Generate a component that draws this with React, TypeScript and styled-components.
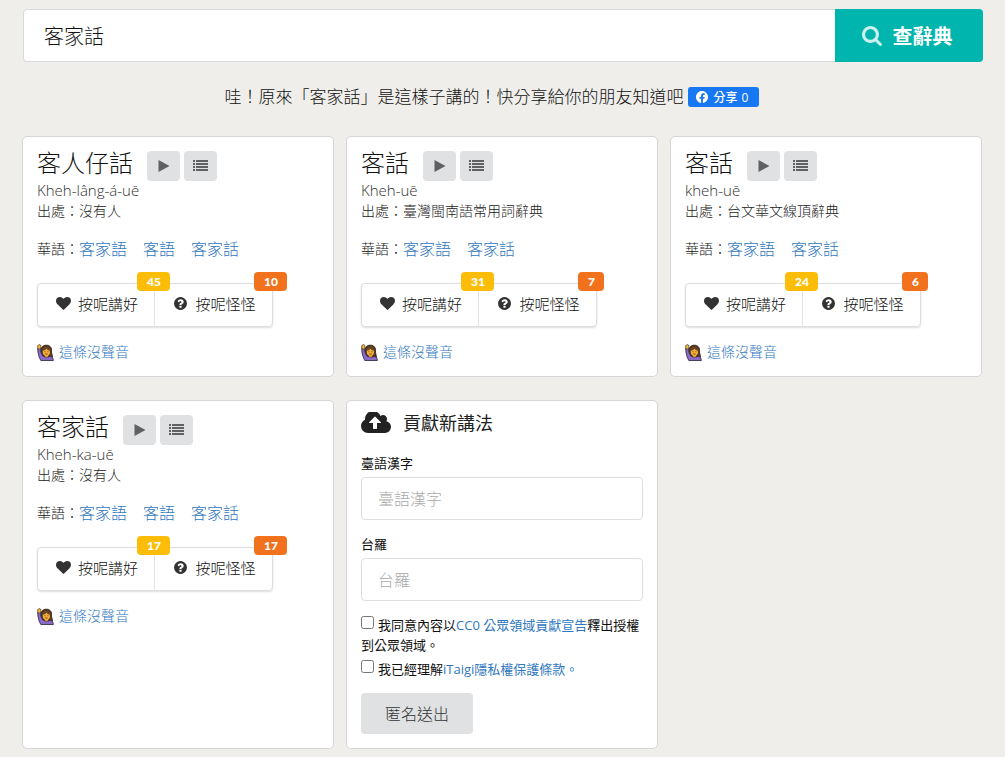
import React, { useState } from "react";
import styled, { createGlobalStyle } from "styled-components";

const GlobalStyle = createGlobalStyle`
  * { box-sizing: border-box; }
  body {
    margin: 0;
    background: #efeeeb;
    color: #111;
    font-family: "Open Sans", "Noto Sans CJK TC", sans-serif;
    font-size: 14px;
    font-weight: 300;
    line-height: 20px;
  }
  button, input { font-family: inherit; font-weight: inherit; }
`;

const Page = styled.main`
  max-width: 1200px;
  margin: 0 auto;
  padding: 9px 22px 8px;
`;

const SearchBar = styled.form`
  display: flex;
  height: 53px;
  margin-left: 1px;
`;

const SearchInput = styled.input`
  flex: 1;
  min-width: 0;
  padding: 0 20px;
  border: 1px solid #d9dadb;
  border-right: 0;
  border-radius: 4px 0 0 4px;
  background: #fff;
  color: #111;
  font-size: 20px;
  outline: none;
`;

const SearchButton = styled.button`
  display: flex;
  align-items: center;
  justify-content: center;
  gap: 11px;
  width: 148px;
  padding: 0 4px 0 0;
  border: 0;
  border-radius: 0 4px 4px 0;
  background: #00b5ad;
  color: #fff;
  font-size: 20px;
  font-weight: 700;
  svg { opacity: 0.8; }
`;

const ShareLine = styled.p`
  display: flex;
  align-items: center;
  justify-content: center;
  gap: 4px;
  height: 24px;
  margin: 23px 22px 27px 0;
  font-size: 17px;
`;

const ShareButton = styled.button`
  display: flex;
  align-items: center;
  gap: 6px;
  width: 71px;
  height: 20px;
  padding: 0 8px;
  border: 0;
  border-radius: 3px;
  background: #1877f2;
  color: #fff;
  font-size: 12px;
  font-weight: 500;
  white-space: nowrap;
`;

const ShareCount = styled.span`
  margin-left: -2px;
`;

const Cards = styled.section`
  display: grid;
  grid-template-columns: repeat(3, 1fr);
  gap: 23px 12px;
  margin-right: 1px;
`;

const Card = styled.article`
  min-width: 0;
  padding: 12px 14px 14px;
  border: 1px solid #d6d6d8;
  border-radius: 5px;
  background: #fff;
`;

const WordRow = styled.header`
  display: flex;
  align-items: flex-start;
  gap: 4px;
  height: 31px;
`;

const Word = styled.h2`
  margin: 0 10px 0 0;
  font-size: 24px;
  font-weight: 300;
  line-height: 28px;
`;

const IconButton = styled.button`
  display: flex;
  align-items: center;
  justify-content: center;
  width: 33px;
  height: 30px;
  margin-top: 2px;
  padding: 0;
  border: 0;
  border-radius: 4px;
  background: #e0e1e2;
  color: #606162;
`;

const Reading = styled.div`
  color: #333;
  font-size: 15px;
  line-height: 21px;
`;

const Source = styled.div`
  color: #222;
`;

const Mandarin = styled.div`
  display: flex;
  align-items: center;
  height: 24px;
  margin-top: 16px;
`;

const TextLink = styled.a`
  color: #3077be;
  text-decoration: none;
`;

const WordLink = styled(TextLink)`
  margin-right: 16px;
  font-size: 16px;
`;

const Votes = styled.div`
  display: inline-flex;
  margin-top: 22px;
  border: 1px solid #dcddde;
  border-radius: 4px;
  box-shadow: 0 1px 2px rgba(34, 36, 38, 0.15);
`;

const VoteButton = styled.button`
  position: relative;
  display: flex;
  align-items: center;
  justify-content: center;
  gap: 7px;
  width: 116px;
  height: 42px;
  padding: 0 0 3px 2px;
  border: 0;
  background: transparent;
  color: #111;
  font-size: 15px;
  & + & {
    width: 118px;
    border-left: 1px solid #e4e4e5;
  }
  svg { color: #333; }
`;

const VoteCount = styled.span<{ $tone: string }>`
  position: absolute;
  z-index: 1;
  top: -12px;
  left: 99px;
  padding: 0 9px 0 10px;
  border-radius: 4px;
  background: ${(p) => p.$tone};
  color: #fff;
  font-family: Lato, sans-serif;
  font-size: 12px;
  font-weight: 900;
  line-height: 19px;
`;

const SoundRow = styled.div`
  display: flex;
  align-items: center;
  gap: 5px;
  margin-top: 15px;
`;

const FormTitle = styled.h3`
  display: flex;
  align-items: center;
  gap: 12px;
  height: 20px;
  margin: 0 0 20px;
  color: #222;
  font-size: 18px;
  font-weight: 400;
`;

const FieldLabel = styled.label`
  display: block;
  margin-bottom: 4px;
  font-size: 13px;
  font-weight: 400;
`;

const TextField = styled.input`
  display: block;
  width: 100%;
  height: 43px;
  margin-bottom: 14px;
  padding: 0 16px;
  border: 1px solid #dededf;
  border-radius: 4px;
  background: #fff;
  font-size: 16px;
  outline: none;
  &::placeholder { color: #aaa; opacity: 1; }
`;

const Consent = styled.div`
  margin-bottom: 4px;
  font-size: 13px;
  font-weight: 400;
`;

const Tick = styled.input`
  width: 13px;
  height: 13px;
  margin: 0 4px 0 0;
  vertical-align: 1px;
`;

const SubmitButton = styled.button`
  height: 41px;
  margin-top: 10px;
  padding: 0 24px 2px;
  border: 0;
  border-radius: 4px;
  background: #e0e1e2;
  color: #333;
  font-size: 16px;
`;

type GlyphProps = { d: string; width: number; height: number; box?: string };

const Glyph = ({ d, width, height, box = "0 0 1792 1792" }: GlyphProps) => (
  <svg width={width} height={height} viewBox={box} fill="currentColor" aria-hidden="true">
    <path d={d} />
  </svg>
);

const SEARCH =
  "M1216 832q0-185-131.5-316.5t-316.5-131.5-316.5 131.5-131.5 316.5 131.5 316.5 316.5 131.5 316.5-131.5 131.5-316.5zm512 832q0 52-38 90t-90 38q-54 0-90-38l-343-342q-179 124-399 124-143 0-273.5-55.5t-225-150-150-225-55.5-273.5 55.5-273.5 150-225 225-150 273.5-55.5 273.5 55.5 225 150 150 225 55.5 273.5q0 220-124 399l343 343q37 37 37 90z";
const HEART =
  "M896 1664q-26 0-44-18l-624-602q-10-8-27.5-26t-55.5-65.5-68-97.5-53.5-121-23.5-138q0-220 127-344t351-124q62 0 126.5 21.5t120 58 95.5 68.5 76 68q36-36 76-68t95.5-68.5 120-58 126.5-21.5q224 0 351 124t127 344q0 221-229 450l-623 600q-18 18-44 18z";
const QUESTION =
  "M1024 1376v-192q0-14-9-23t-23-9h-192q-14 0-23 9t-9 23v192q0 14 9 23t23 9h192q14 0 23-9t9-23zm256-672q0-88-55.5-163t-138.5-116-170-41q-243 0-371 213-15 24 8 42l132 100q7 6 19 6 16 0 25-12 53-68 86-92 34-24 86-24 48 0 85.5 26t37.5 59q0 38-20 61t-68 45q-63 28-115.5 86.5t-52.5 125.5v36q0 14 9 23t23 9h192q14 0 23-9t9-23q0-19 21.5-49.5t54.5-49.5q32-18 49-28.5t46-35 44.5-48 28-60.5 12.5-81zm384 192q0 209-103 385.5t-279.5 279.5-385.5 103-385.5-103-279.5-279.5-103-385.5 103-385.5 279.5-279.5 385.5-103 385.5 103 279.5 279.5 103 385.5z";
const CLOUD =
  "M1280 864q0-14-9-23l-352-352q-9-9-23-9t-23 9l-351 351q-10 12-10 24 0 14 9 23t23 9h224v352q0 13 9.5 22.5t22.5 9.5h192q13 0 22.5-9.5t9.5-22.5v-352h224q13 0 22.5-9.5t9.5-22.5zm640 288q0 159-112.5 271.5t-271.5 112.5h-1088q-185 0-316.5-131.5t-131.5-316.5q0-130 70-240t188-165q-2-30-2-43 0-212 150-362t362-150q156 0 285.5 87t188.5 231q71-62 166-62 106 0 181 75t75 181q0 76-41 138 130 31 213.5 135.5t83.5 238.5z";

const PlayIcon = () => (
  <svg width="12" height="12" viewBox="0 0 12 12" fill="currentColor" aria-hidden="true">
    <path d="M0.500 0 L11.500 6 L0.500 12 Z" />
  </svg>
);

const ListIcon = () => (
  <svg width="15" height="12" viewBox="0 0 15 12" fill="currentColor" aria-hidden="true">
    <path d="M0 0h2v2H0zM0 3h2v2H0zM0 6h2v2H0zM0 9h2v2H0zM3 0h12v2H3zM3 3h12v2H3zM3 6h12v2H3zM3 9h12v2H3z" />
  </svg>
);

const FacebookIcon = () => (
  <svg width="12" height="12" viewBox="0 0 24 24" fill="#fff" aria-hidden="true">
    <path d="M24 12.07C24 5.4 18.63 0 12 0S0 5.4 0 12.07C0 18.1 4.39 23.1 10.13 24v-8.44H7.08v-3.49h3.05V9.41c0-3.02 1.79-4.69 4.53-4.69 1.31 0 2.68.24 2.68.24v2.97h-1.51c-1.49 0-1.96.93-1.96 1.89v2.25h3.33l-.53 3.49h-2.8V24C19.61 23.1 24 18.1 24 12.07z" />
  </svg>
);

const RaisedHandIcon = () => (
  <svg width="17" height="17" viewBox="0 0 17 17" aria-hidden="true">
    <path d="M4.200 8.500C3.700 3.500 5.500 1.200 9.300 1.200s5.700 2.300 5.200 7l1 5H5z" fill="#5a3921" stroke="#1a120c" strokeWidth=".8" />
    <path d="M.7 4.500L3.600 4.500l.2 3.500 2.200 4c2.300 1.400 5.200 1.300 7.300.2 2 .5 3 2.300 3.100 4.300H3.800C2 13.500.8 9.500.7 5z" fill="#8a6cc4" stroke="#2a2040" strokeWidth=".8" />
    <path d="M.7 1.600L2.300.5l1.600.9v3L2.500 5.200.7 4.500z" fill="#f0b83c" stroke="#2b1b10" strokeWidth=".6" />
    <path d="M7.800 11h3.400v1.500c-.8 1-2.600 1-3.400 0z" fill="#dc982e" />
    <ellipse cx="9.400" cy="7.800" rx="3.700" ry="4" fill="#f4b13a" />
    <path d="M5.500 6.700c2-.2 3.300-1 3.900-2 .7 1 2 1.800 3.900 2C13.200 4 11.700 2.800 9.400 2.800S5.600 4 5.500 6.700z" fill="#6a4526" />
    <path d="M7.900 7.200v1M11 7.200v1M8.200 9.700c.8.600 1.700.6 2.500 0" fill="none" stroke="#5a3010" strokeWidth=".8" />
  </svg>
);

type Entry = {
  word: string;
  reading: string;
  source: string;
  mandarin: string[];
  good: number;
  odd: number;
};

const ENTRIES: Entry[] = [
  { word: "客人仔話", reading: "Kheh-lâng-á-uē", source: "沒有人", mandarin: ["客家語", "客語", "客家話"], good: 45, odd: 10 },
  { word: "客話", reading: "Kheh-uē", source: "臺灣閩南語常用詞辭典", mandarin: ["客家語", "客家話"], good: 31, odd: 7 },
  { word: "客話", reading: "kheh-uē", source: "台文華文線頂辭典", mandarin: ["客家語", "客家話"], good: 24, odd: 6 },
  { word: "客家話", reading: "Kheh-ka-uē", source: "沒有人", mandarin: ["客家語", "客語", "客家話"], good: 17, odd: 17 },
];

const EntryCard = ({ entry }: { entry: Entry }) => (
  <Card>
    <WordRow>
      <Word>{entry.word}</Word>
      <IconButton type="button" aria-label="播放"><PlayIcon /></IconButton>
      <IconButton type="button" aria-label="清單"><ListIcon /></IconButton>
    </WordRow>
    <Reading>{entry.reading}</Reading>
    <Source>出處：{entry.source}</Source>
    <Mandarin>
      華語：
      {entry.mandarin.map((m) => (
        <WordLink key={m} href="#">{m}</WordLink>
      ))}
    </Mandarin>
    <Votes>
      <VoteButton type="button">
        <Glyph d={HEART} width={15} height={15} />
        按呢講好
        <VoteCount $tone="#fbbd08">{entry.good}</VoteCount>
      </VoteButton>
      <VoteButton type="button">
        <Glyph d={QUESTION} width={15} height={15} />
        按呢怪怪
        <VoteCount $tone="#f2711c">{entry.odd}</VoteCount>
      </VoteButton>
    </Votes>
    <SoundRow>
      <RaisedHandIcon />
      <TextLink href="#">這條沒聲音</TextLink>
    </SoundRow>
  </Card>
);

const ContributeForm = () => (
  <Card as="form" onSubmit={(e: React.FormEvent) => e.preventDefault()}>
    <FormTitle>
      <Glyph d={CLOUD} width={30} height={22} box="0 192 1920 1408" />
      貢獻新講法
    </FormTitle>
    <FieldLabel htmlFor="hanji">臺語漢字</FieldLabel>
    <TextField id="hanji" placeholder="臺語漢字" />
    <FieldLabel htmlFor="tailo">台羅</FieldLabel>
    <TextField id="tailo" placeholder="台羅" />
    <Consent>
      <Tick type="checkbox" id="license" />
      <label htmlFor="license">
        我同意內容以<TextLink href="#">CC0 公眾領域貢獻宣告</TextLink>釋出授權到公眾領域。
      </label>
    </Consent>
    <Consent>
      <Tick type="checkbox" id="privacy" />
      <label htmlFor="privacy">
        我已經理解<TextLink href="#">iTaigi隱私權保護條款。</TextLink>
      </label>
    </Consent>
    <SubmitButton type="submit">匿名送出</SubmitButton>
  </Card>
);

export default function App() {
  const [query, setQuery] = useState("客家話");
  return (
    <>
      <GlobalStyle />
      <Page>
        <SearchBar onSubmit={(e) => e.preventDefault()}>
          <SearchInput aria-label="查辭典" value={query} onChange={(e) => setQuery(e.target.value)} />
          <SearchButton type="submit">
            <Glyph d={SEARCH} width={20} height={20} box="64 128 1664 1664" />
            查辭典
          </SearchButton>
        </SearchBar>
        <ShareLine>
          哇！原來「客家話」是這樣子講的！快分享給你的朋友知道吧
          <ShareButton type="button">
            <FacebookIcon />
            分享<ShareCount>0</ShareCount>
          </ShareButton>
        </ShareLine>
        <Cards>
          {ENTRIES.map((entry) => (
            <EntryCard key={entry.reading} entry={entry} />
          ))}
          <ContributeForm />
        </Cards>
      </Page>
    </>
  );
}
